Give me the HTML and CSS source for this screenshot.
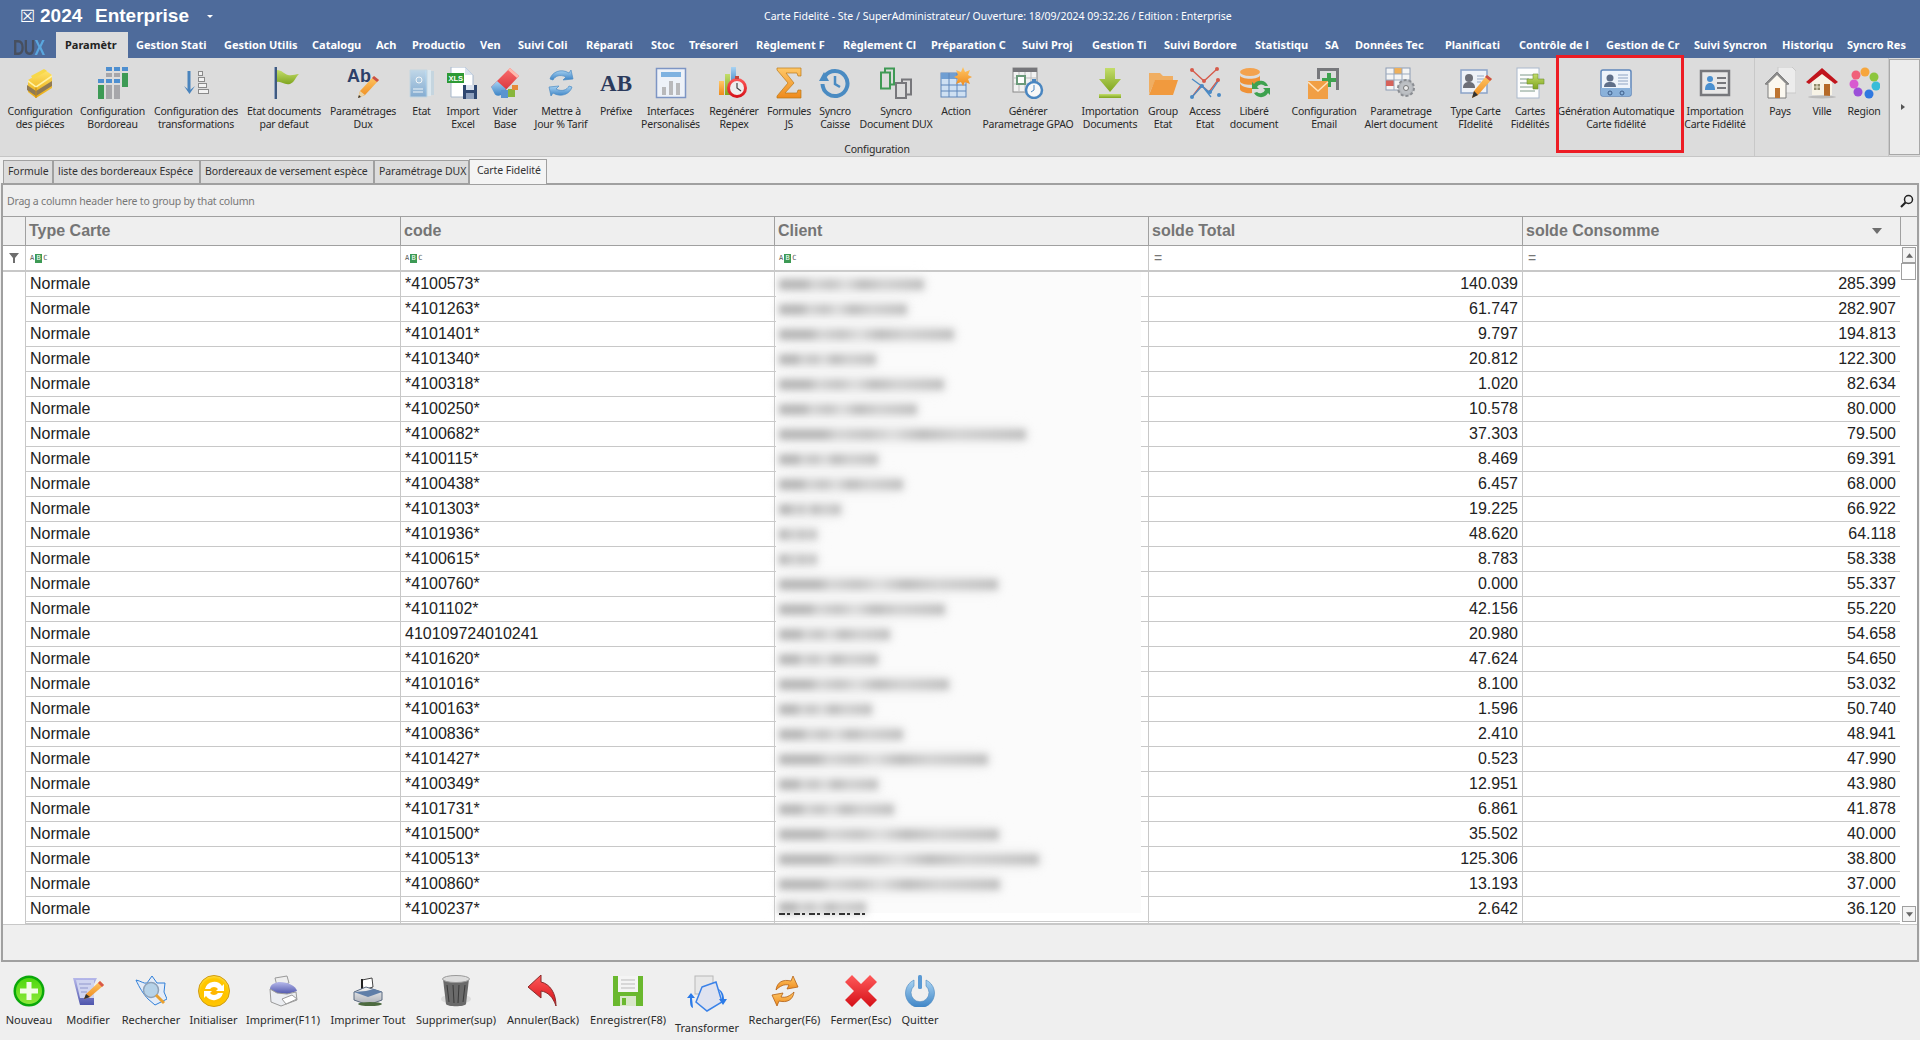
FILE: index.html
```html
<!DOCTYPE html>
<html lang="fr">
<head>
<meta charset="utf-8">
<title>Carte Fidelité</title>
<link rel="stylesheet" href="styles.css">
</head>
<body>
<svg class="defs" aria-hidden="true"><defs>
<linearGradient id="gY" x1="0" y1="0" x2="0" y2="1"><stop offset="0" stop-color="#ffe56a"/><stop offset="1" stop-color="#eaa80c"/></linearGradient>
<linearGradient id="gG" x1="0" y1="0" x2="0" y2="1"><stop offset="0" stop-color="#c3dd6a"/><stop offset="1" stop-color="#7fa51f"/></linearGradient>
<linearGradient id="gN" x1="0" y1="0" x2="0" y2="1"><stop offset="0" stop-color="#4dd80f"/><stop offset="1" stop-color="#8ee83a"/></linearGradient>
<linearGradient id="gB" x1="0" y1="0" x2="0" y2="1"><stop offset="0" stop-color="#a9d3f2"/><stop offset="1" stop-color="#3d84c6"/></linearGradient>
<linearGradient id="gR" x1="0" y1="0" x2="0" y2="1"><stop offset="0" stop-color="#ff5a5a"/><stop offset="1" stop-color="#d40f17"/></linearGradient>
<linearGradient id="gO" x1="0" y1="0" x2="0" y2="1"><stop offset="0" stop-color="#ffc766"/><stop offset="1" stop-color="#ee8a1c"/></linearGradient>
<linearGradient id="gS" x1="0" y1="0" x2="0" y2="1"><stop offset="0" stop-color="#f4f4f4"/><stop offset="1" stop-color="#a8acb4"/></linearGradient>
<linearGradient id="gV" x1="0" y1="0" x2="0" y2="1"><stop offset="0" stop-color="#b6b8ea"/><stop offset="1" stop-color="#4f56ad"/></linearGradient>
<radialGradient id="gC" cx=".5" cy=".55" r=".55"><stop offset="0" stop-color="#ffb400"/><stop offset=".8" stop-color="#ffc800"/><stop offset="1" stop-color="#ffe14a"/></radialGradient>
</defs></svg>

<header class="titlebar">
  <div class="brand"><span class="brand-box">☒</span><span class="brand-year">2024</span><span class="brand-name">Enterprise</span><span class="brand-caret"></span></div>
  <div class="doc-title">Carte Fidelité - Ste / SuperAdministrateur/ Ouverture: 18/09/2024 09:32:26 / Edition : Enterprise</div>
</header>

<nav class="nav">
  <div class="logo"><span class="logo-text">DU<span class="logo-x">X</span></span></div>
  <div class="nav-list">
    <span class="nav-item"><span class="nav-active">Paramètr</span></span>
    <span class="nav-item">Gestion Stati</span><span class="nav-item">Gestion Utilis</span><span class="nav-item">Catalogu</span><span class="nav-item">Ach</span><span class="nav-item">Productio</span><span class="nav-item">Ven</span><span class="nav-item">Suivi Coli</span><span class="nav-item">Réparati</span><span class="nav-item">Stoc</span><span class="nav-item">Trésoreri</span><span class="nav-item">Règlement F</span><span class="nav-item">Règlement Cl</span><span class="nav-item">Préparation C</span><span class="nav-item">Suivi Proj</span><span class="nav-item">Gestion Ti</span><span class="nav-item">Suivi Bordore</span><span class="nav-item">Statistiqu</span><span class="nav-item">SA</span><span class="nav-item">Données Tec</span><span class="nav-item">Planificati</span><span class="nav-item">Contrôle de l</span><span class="nav-item">Gestion de Cr</span><span class="nav-item">Suivi Syncron</span><span class="nav-item">Historiqu</span><span class="nav-item">Syncro Res</span>
  </div>
</nav>

<section class="ribbon">
  <div class="rb-group rb-main">
    <div class="rb-items rb-items-main">
      <div class="rb-item"><svg class="ico" viewBox="0 0 32 32"><path d="M4 13 21 3l7 5v13L12 31l-8-6z" fill="url(#gY)"/><path d="M4 13l8 6 16-11v2L12 21l-8-6z" fill="#fff3a8"/><path d="M7 9 20 2l3 2L9 12z" fill="#f7d84a"/><path d="M3 18l9 6 16-10v5L12 29l-9-6z" fill="#8f7a55"/><path d="M12 20v11" stroke="#c98a10" fill="none"/></svg><span class="rb-label">Configuration<br>des piéces</span></div>
      <div class="rb-item"><svg class="ico" viewBox="0 0 32 32"><g fill="#4e8fd0"><rect x="9" y="0" width="6" height="4"/><rect x="17" y="0" width="6" height="4"/><rect x="25" y="0" width="6" height="4"/><rect x="1" y="12" width="6" height="4"/><rect x="9" y="12" width="6" height="4"/><rect x="17" y="12" width="6" height="4"/></g><g fill="#a6a6aa"><rect x="9" y="6" width="6" height="4"/><rect x="17" y="6" width="6" height="4"/><rect x="9" y="18" width="6" height="14"/><rect x="17" y="18" width="6" height="14"/></g><g fill="#3d9a55"><rect x="25" y="6" width="6" height="14"/><rect x="1" y="18" width="6" height="14"/></g></svg><span class="rb-label">Configuration<br>Bordoreau</span></div>
      <div class="rb-item"><svg class="ico" viewBox="0 0 32 32"><path d="M9 4v20" stroke="#4a84bd" stroke-width="3" fill="none"/><path d="M4 19l5.500 8 5.500-8-5.500 4.500z" fill="#4a84bd"/><g fill="#f2f2f2" stroke="#8a8a8a"><rect x="18.500" y="4.500" width="4" height="4"/><rect x="18.500" y="10.500" width="6" height="4"/><rect x="18.500" y="16.500" width="8" height="4"/><rect x="18.500" y="22.500" width="10" height="4"/></g></svg><span class="rb-label">Configuration des<br>transformations</span></div>
      <div class="rb-item"><svg class="ico" viewBox="0 0 32 32"><path d="M9 3c5 0 7 4 11 5 4 .8 7-.5 11-1-3 2-4 8-9 10-6 1.500-8-3-13-2z" fill="url(#gG)"/><rect x="6" y="0" width="3" height="32" fill="#3f5a80"/><rect x="6" y="0" width="1" height="32" fill="#93a6c2"/></svg><span class="rb-label">Etat documents<br>par defaut</span></div>
      <div class="rb-item"><svg class="ico" viewBox="0 0 32 32"><text x="0" y="15" class="ico-sans" font-size="18" fill="#2c4069">Ab</text><path d="M11 31l2-7L27 9l5 4L18 28z" fill="url(#gO)"/><path d="M27 9l5 4-2 2-5-4z" fill="#c8504a"/><path d="M11 31l2-7 5 4z" fill="#e9d4a8"/><path d="M11 31l1-3 2 2z" fill="#333"/></svg><span class="rb-label">Paramétrages<br>Dux</span></div>
      <div class="rb-item"><svg class="ico" viewBox="0 0 32 32"><path d="M22 4h6v24h-6z" fill="#c5d5df"/><path d="M19 3h6v26h-6z" fill="#dce8ef"/><path d="M4 3h17v27H4z" fill="url(#gB)" opacity=".55"/><path d="M4 3h17v27H4z" fill="none" stroke="#c4d6e1"/><circle cx="13" cy="13" r="3" fill="none" stroke="#f2f6f8"/><path d="M7 22h10M7 25h10" stroke="#eef4f8" fill="none"/></svg><span class="rb-label">Etat</span></div>
      <div class="rb-item"><svg class="ico" viewBox="0 0 32 32"><path d="M4 0h14l8 8v22H4z" fill="#fff" stroke="#a8b8cc"/><path d="M18 0v8h8z" fill="#d8e2ee"/><rect x="0" y="6" width="17" height="10" fill="#2d9a35"/><text x="1.500" y="14" class="ico-sans" font-size="7.500" fill="#fff">XLS</text><rect x="16" y="18" width="14" height="14" fill="#2f4770"/><rect x="19" y="18" width="8" height="5" fill="#dce3ee"/><rect x="19" y="26" width="8" height="6" fill="#8ea0bd"/></svg><span class="rb-label">Import<br>Excel</span></div>
      <div class="rb-item"><svg class="ico" viewBox="0 0 32 32"><path d="M2 20 21 1l9 8L13 27z" fill="url(#gR)" opacity=".85"/><path d="M2 20l6-6 9 8-5 6c-2 1-4 1-6-.5z" fill="url(#gB)"/><path d="M21 1l9 8-2 2-9-8z" fill="#ffb9ae"/><rect x="12" y="23" width="7" height="8" fill="#5a94cf"/><rect x="19" y="22" width="7" height="8" fill="#88b63c"/><rect x="23" y="18" width="6" height="5" fill="#e58a3a"/></svg><span class="rb-label">Vider<br>Base</span></div>
      <div class="rb-item"><svg class="ico" viewBox="0 0 32 32"><path d="M5 12C7 5 16 1 24 6l2-3 2 9-10 1 3-3c-6-3-11-1-13 3z" fill="url(#gB)" stroke="#4a8bc4" stroke-width=".7"/><path d="M27 20c-2 7-11 11-19 6l-2 3-2-9 10-1-3 3c6 3 11 1 13-3z" fill="url(#gB)" stroke="#4a8bc4" stroke-width=".7"/></svg><span class="rb-label">Mettre à<br>Jour % Tarif</span></div>
      <div class="rb-item"><svg class="ico" viewBox="0 0 32 32"><text x="16" y="24" text-anchor="middle" class="ico-serif" font-size="23" fill="#2b3a5c">AB</text></svg><span class="rb-label">Préfixe</span></div>
      <div class="rb-item"><svg class="ico" viewBox="0 0 32 32"><rect x="1.500" y="1.500" width="29" height="29" fill="#eef2f8" stroke="#7d95c4" stroke-width="1.500"/><rect x="6" y="5" width="20" height="5" fill="#7fb2e0"/><rect x="7" y="20" width="4" height="8" fill="#b9b9bb"/><rect x="14" y="14" width="4" height="14" fill="#b9b9bb"/><rect x="21" y="16" width="4" height="12" fill="#b9b9bb"/></svg><span class="rb-label">Interfaces<br>Personalisés</span></div>
      <div class="rb-item"><svg class="ico" viewBox="0 0 32 32"><rect x="1" y="14" width="5" height="14" fill="url(#gO)"/><rect x="7" y="7" width="5" height="21" fill="url(#gG)"/><rect x="13" y="0" width="5" height="18" fill="url(#gB)"/><circle cx="19" cy="21" r="10" fill="url(#gR)"/><circle cx="19" cy="21" r="7" fill="#eee"/><path d="M19 16v5l4 3" stroke="#444" fill="none" stroke-width="1.200"/><rect x="17" y="9" width="4" height="3" fill="#c4463c"/></svg><span class="rb-label">Regénérer<br>Repex</span></div>
      <div class="rb-item"><svg class="ico" viewBox="0 0 32 32"><path d="M4 1h24v8h-3l-1-3H13l8 10-9 10h12l1-3h3v8H4v-2l11-13L4 3z" fill="url(#gO)" stroke="#b9791a" stroke-width=".7"/></svg><span class="rb-label">Formules<br>JS</span></div>
      <div class="rb-item"><svg class="ico" viewBox="0 0 32 32"><path d="M6 9a12.500 12.500 0 1 1-2.500 8" fill="none" stroke="#4a8bc2" stroke-width="4"/><path d="M0 14l5-9 5 9z" fill="#4a8bc2"/><path d="M16 9v8l5 3" fill="none" stroke="#4a8bc2" stroke-width="2.500"/></svg><span class="rb-label">Syncro<br>Caisse</span></div>
      <div class="rb-item"><svg class="ico" viewBox="0 0 32 32"><rect x="5" y="1.500" width="9" height="16" fill="none" stroke="#3f9a55" stroke-width="2"/><rect x="1" y="5.500" width="9" height="16" fill="#dcdcdc" stroke="#3f9a55" stroke-width="2"/><rect x="22" y="12.500" width="9" height="15" fill="none" stroke="#77777b" stroke-width="2"/><rect x="16" y="16" width="10" height="15" fill="#dcdcdc" stroke="#77777b" stroke-width="2"/></svg><span class="rb-label">Syncro<br>Document DUX</span></div>
      <div class="rb-item"><svg class="ico" viewBox="0 0 32 32"><rect x="1" y="6" width="25" height="24" fill="#cfe0f2" stroke="#5f86ba"/><rect x="1" y="6" width="25" height="6" fill="#6f9ed2"/><path d="M1 18h25M1 24h25M9 6v24M17 6v24" stroke="#5f86ba" fill="none"/><path d="M23 0l2 5 5-2-2 5 4 2-4 2 2 5-5-2-2 4-2-4-5 2 2-5-4-2 4-2-2-5 5 2z" fill="url(#gO)"/></svg><span class="rb-label">Action</span></div>
      <div class="rb-item"><svg class="ico" viewBox="0 0 32 32"><rect x="1" y="1" width="24" height="24" fill="#f2f2f2" stroke="#888"/><rect x="1" y="1" width="24" height="4" fill="#76767a"/><path d="M1 11h24M1 17h24M7 5v20M13 5v20M19 5v20" stroke="#bbb" fill="none"/><rect x="5" y="9" width="8" height="8" fill="#fff" stroke="#6b9a7a" stroke-width="2"/><circle cx="22" cy="23" r="8" fill="#f8f8f8" stroke="#4a86c0" stroke-width="2.500"/><rect x="20" y="12" width="4" height="3" fill="#4a86c0"/><path d="M22 18v5l-3 2" stroke="#4a86c0" fill="none"/></svg><span class="rb-label">Générer<br>Parametrage GPAO</span></div>
      <div class="rb-item"><svg class="ico" viewBox="0 0 32 32"><path d="M11 1h10v11h6L16 25 5 12h6z" fill="url(#gG)"/><rect x="5" y="27" width="22" height="4" fill="url(#gG)"/></svg><span class="rb-label">Importation<br>Documents</span></div>
      <div class="rb-item"><svg class="ico" viewBox="0 0 32 32"><path d="M2 27V6h11l3 3h10v5H8z" fill="#f0ae62"/><path d="M2 28 8 13h23l-5 15z" fill="#f19a3e"/></svg><span class="rb-label">Group<br>Etat</span></div>
      <div class="rb-item"><svg class="ico" viewBox="0 0 32 32"><path d="M3 3l12 11 13-12M3 30l9-12 8 7 9-12" fill="none" stroke="#d65a4a" stroke-width="1.300"/><path d="M3 30 13 19l8 7 9-13M3 12l11 8 8 10" fill="none" stroke="#4a8ac4" stroke-width="1.300"/><g fill="#d65a4a"><circle cx="3" cy="3" r="2"/><circle cx="15" cy="14" r="2"/><circle cx="28" cy="2" r="2"/><circle cx="29" cy="13" r="2"/></g><g fill="#4a8ac4"><circle cx="3" cy="30" r="2"/><circle cx="13" cy="19" r="2"/><circle cx="21" cy="25" r="2"/><circle cx="30" cy="28" r="2"/></g></svg><span class="rb-label">Access<br>Etat</span></div>
      <div class="rb-item"><svg class="ico" viewBox="0 0 32 32"><ellipse cx="12" cy="5" rx="10" ry="4" fill="#f3a24e"/><path d="M2 8v6c0 5 20 5 20 0V8c0 5-20 5-20 0zM2 16v6c0 3 8 5 12 4v-5c-5 0-12-2-12-5z" fill="#ef9136"/><path d="M30 19a8 8 0 0 0-14-2l-2-2v7h7l-2-2a5 5 0 0 1 8-1zM16 26a8 8 0 0 0 14 0l2 2v-7h-7l2 2a5 5 0 0 1-8 2z" fill="#3ea24f"/></svg><span class="rb-label">Libéré<br>document</span></div>
      <div class="rb-item"><svg class="ico" viewBox="0 0 32 32"><path d="M9 1h22v22h-3V4H9z" fill="#77787c"/><path d="M9 1h3v11H9z" fill="#77787c"/><path d="M19 6h4v5h5v4h-5v5h-4v-5h-5v-4h5z" fill="#3ea24f"/><rect x="0" y="14" width="20" height="18" fill="#f19f45"/><path d="M0 15l10 9 10-9" fill="none" stroke="#ffe3bd" stroke-width="1.500"/></svg><span class="rb-label">Configuration<br>Email</span></div>
      <div class="rb-item"><svg class="ico" viewBox="0 0 32 32"><rect x="1" y="1" width="24" height="22" fill="#f4f4f4" stroke="#8c9bb3"/><rect x="9" y="1" width="8" height="6" fill="#efb05a"/><rect x="1" y="13" width="8" height="6" fill="#d6625a"/><path d="M1 7h24M1 13h24M9 1v22M17 1v22" stroke="#9ba9bd" fill="none"/><circle cx="21" cy="21" r="8" fill="#b4b7bb" stroke="#8a8d92" stroke-width="2" stroke-dasharray="3 2"/><circle cx="21" cy="21" r="6" fill="#bdc0c4"/><circle cx="21" cy="21" r="2.500" fill="#eee" stroke="#777"/></svg><span class="rb-label">Parametrage<br>Alert document</span></div>
      <div class="rb-item"><svg class="ico" viewBox="0 0 32 32"><rect x="1" y="3" width="26" height="23" fill="#eef2f8" stroke="#8ba3c8" stroke-width="1.500"/><circle cx="9" cy="11" r="4" fill="#6d6f78"/><path d="M3 21c0-5 3-6 6-6s6 1 6 6z" fill="#6d6f78"/><path d="M17 9h7M17 12h7M17 15h4" stroke="#97a9c4" fill="none"/><path d="M12 31l2-7L27 8l5 4-14 16z" fill="url(#gO)"/><path d="M27 8l5 4-2 2-5-4z" fill="#c8504a"/><path d="M12 31l2-7 4 4z" fill="#333"/></svg><span class="rb-label">Type Carte<br>FIdelité</span></div>
      <div class="rb-item"><svg class="ico" viewBox="0 0 32 32"><rect x="3" y="1" width="22" height="30" fill="#fdfdfd" stroke="#a9b8cc"/><path d="M6 8h13M6 12h9M6 16h15M6 20h15M6 24h15" stroke="#7f9a8a" fill="none"/><path d="M19 7h5v5h6v5h-6v5h-5v-5h-6v-5h6z" fill="url(#gG)" stroke="#6f9132" stroke-width=".6"/></svg><span class="rb-label">Cartes<br>Fidélités</span></div>
      <div class="rb-item rb-item-marked"><svg class="ico" viewBox="0 0 32 32"><rect x="1" y="3" width="30" height="26" rx="2" fill="#eef3fa" stroke="#5f86ba" stroke-width="1.500"/><path d="M1 21h30v6a2 2 0 0 1-2 2H3a2 2 0 0 1-2-2z" fill="#8ab1da"/><circle cx="10" cy="11" r="3.500" fill="#5f6e88"/><path d="M4 20c0-4 3-5 6-5s6 1 6 5z" fill="#5f6e88"/><path d="M18 8h10M18 11h10M18 14h10M18 17h10" stroke="#8ea3c2" fill="none"/><circle cx="10" cy="26" r="2" fill="none" stroke="#3d5d89"/><circle cx="22" cy="26" r="2" fill="none" stroke="#3d5d89"/></svg><span class="rb-label">Génération Automatique<br>Carte fidélité</span><span class="rb-mark"></span></div>
      <div class="rb-item"><svg class="ico" viewBox="0 0 32 32"><rect x="2" y="4" width="28" height="24" fill="#e8e8e8" stroke="#77787c" stroke-width="2.500"/><circle cx="11" cy="12" r="3" fill="#4a90d0"/><path d="M6 23c0-5 2-7 5-7s5 2 5 7z" fill="#4a90d0"/><path d="M18 11h9M18 16h9M18 21h9" stroke="#77787c" stroke-width="2" fill="none"/></svg><span class="rb-label">Importation<br>Carte Fidélité</span></div>
    </div>
    <div class="rb-title">Configuration</div>
  </div>
  <div class="rb-group rb-side">
    <div class="rb-items rb-items-side">
      <div class="rb-item"><svg class="ico" viewBox="0 0 32 32"><path d="M14 0h14l4 4v22H14z" fill="#ececec" stroke="#c9c9c9"/><path d="M1 17 13 5l12 12h-3v14H4V17z" fill="#fbf8f0" stroke="#7d7d7d"/><rect x="11" y="21" width="5" height="10" fill="#bd7430"/><path d="M1 17 13 5l12 12-2 1L13 8 3 18z" fill="#8b8b8b"/></svg><span class="rb-label">Pays</span></div>
      <div class="rb-item"><svg class="ico" viewBox="0 0 32 32"><path d="M6 14 16 5l10 9v14H6z" fill="#f7f3e6"/><path d="M0 15 16 1l16 14-3 2L16 7 3 17z" fill="#c1151c"/><rect x="18" y="17" width="6" height="12" fill="#b56a28"/><rect x="8" y="17" width="6" height="6" fill="#8f8a6a"/><path d="M11 17v6M8 20h6" stroke="#eee8d0" fill="none"/><ellipse cx="16" cy="30" rx="14" ry="1.500" fill="#bbb"/></svg><span class="rb-label">Ville</span></div>
      <div class="rb-item"><svg class="ico" viewBox="0 0 32 32"><circle cx="17" cy="5" r="4.500" fill="#f6a63c"/><circle cx="26" cy="10" r="4.500" fill="#8cc63e"/><circle cx="28" cy="19" r="4.500" fill="#38bcd8"/><circle cx="21" cy="27" r="4.500" fill="#2f78e0"/><circle cx="10" cy="25" r="4.500" fill="#9b4fd8"/><circle cx="6" cy="17" r="4.500" fill="#d85ad0"/><circle cx="8" cy="8" r="4.500" fill="#f0607a"/><circle cx="17" cy="16" r="5" fill="#dcdcdc"/></svg><span class="rb-label">Region</span></div>
    </div>
  </div>
  <button class="rb-scroll" type="button"><span class="rb-scroll-arrow"></span></button>
</section>

<div class="tabs">
  <span class="tab">Formule</span><span class="tab">liste des bordereaux Espéce</span><span class="tab">Bordereaux de versement espèce</span><span class="tab">Paramétrage DUX</span><span class="tab tab-active">Carte Fidelité</span>
</div>

<main class="panel">
  <div class="groupbar"><span>Drag a column header here to group by that column</span>
    <svg class="search" viewBox="0 0 14 14"><circle cx="8.500" cy="5.500" r="4" fill="none" stroke="#222" stroke-width="1.500"/><path d="M5.500 8.500 1 13" stroke="#222" stroke-width="2.200" fill="none"/></svg>
  </div>
  <div class="gridwrap">
    <table class="grid">
      <colgroup><col class="c-rh"><col class="c-a"><col class="c-b"><col class="c-b"><col class="c-b"><col class="c-e"></colgroup>
      <thead>
        <tr class="head"><th></th><th>Type Carte</th><th>code</th><th>Client</th><th>solde Total</th><th><span class="th-flex">solde Consomme<svg class="caret" viewBox="0 0 10 6"><path d="M0 0h10L5 6z" fill="#6e6e6e"/></svg></span></th></tr>
        <tr class="filter"><td><svg class="funnel" viewBox="0 0 10 10"><path d="M0 0h10L6 5v5H4V5z" fill="#6e6e6e"/></svg></td><td><span class="abc">A<b>B</b>C</span></td><td><span class="abc">A<b>B</b>C</span></td><td><span class="abc">A<b>B</b>C</span></td><td><span class="eq">=</span></td><td><span class="eq">=</span></td></tr>
      </thead>
      <tbody>
        <tr><td></td><td>Normale</td><td>*4100573*</td><td></td><td class="n">140.039</td><td class="n">285.399</td></tr>
        <tr><td></td><td>Normale</td><td>*4101263*</td><td></td><td class="n">61.747</td><td class="n">282.907</td></tr>
        <tr><td></td><td>Normale</td><td>*4101401*</td><td></td><td class="n">9.797</td><td class="n">194.813</td></tr>
        <tr><td></td><td>Normale</td><td>*4101340*</td><td></td><td class="n">20.812</td><td class="n">122.300</td></tr>
        <tr><td></td><td>Normale</td><td>*4100318*</td><td></td><td class="n">1.020</td><td class="n">82.634</td></tr>
        <tr><td></td><td>Normale</td><td>*4100250*</td><td></td><td class="n">10.578</td><td class="n">80.000</td></tr>
        <tr><td></td><td>Normale</td><td>*4100682*</td><td></td><td class="n">37.303</td><td class="n">79.500</td></tr>
        <tr><td></td><td>Normale</td><td>*4100115*</td><td></td><td class="n">8.469</td><td class="n">69.391</td></tr>
        <tr><td></td><td>Normale</td><td>*4100438*</td><td></td><td class="n">6.457</td><td class="n">68.000</td></tr>
        <tr><td></td><td>Normale</td><td>*4101303*</td><td></td><td class="n">19.225</td><td class="n">66.922</td></tr>
        <tr><td></td><td>Normale</td><td>*4101936*</td><td></td><td class="n">48.620</td><td class="n">64.118</td></tr>
        <tr><td></td><td>Normale</td><td>*4100615*</td><td></td><td class="n">8.783</td><td class="n">58.338</td></tr>
        <tr><td></td><td>Normale</td><td>*4100760*</td><td></td><td class="n">0.000</td><td class="n">55.337</td></tr>
        <tr><td></td><td>Normale</td><td>*4101102*</td><td></td><td class="n">42.156</td><td class="n">55.220</td></tr>
        <tr><td></td><td>Normale</td><td>410109724010241</td><td></td><td class="n">20.980</td><td class="n">54.658</td></tr>
        <tr><td></td><td>Normale</td><td>*4101620*</td><td></td><td class="n">47.624</td><td class="n">54.650</td></tr>
        <tr><td></td><td>Normale</td><td>*4101016*</td><td></td><td class="n">8.100</td><td class="n">53.032</td></tr>
        <tr><td></td><td>Normale</td><td>*4100163*</td><td></td><td class="n">1.596</td><td class="n">50.740</td></tr>
        <tr><td></td><td>Normale</td><td>*4100836*</td><td></td><td class="n">2.410</td><td class="n">48.941</td></tr>
        <tr><td></td><td>Normale</td><td>*4101427*</td><td></td><td class="n">0.523</td><td class="n">47.990</td></tr>
        <tr><td></td><td>Normale</td><td>*4100349*</td><td></td><td class="n">12.951</td><td class="n">43.980</td></tr>
        <tr><td></td><td>Normale</td><td>*4101731*</td><td></td><td class="n">6.861</td><td class="n">41.878</td></tr>
        <tr><td></td><td>Normale</td><td>*4101500*</td><td></td><td class="n">35.502</td><td class="n">40.000</td></tr>
        <tr><td></td><td>Normale</td><td>*4100513*</td><td></td><td class="n">125.306</td><td class="n">38.800</td></tr>
        <tr><td></td><td>Normale</td><td>*4100860*</td><td></td><td class="n">13.193</td><td class="n">37.000</td></tr>
        <tr><td></td><td>Normale</td><td>*4100237*</td><td></td><td class="n">2.642</td><td class="n">36.120</td></tr>
        <tr class="stub"><td></td><td></td><td></td><td></td><td></td><td></td></tr>
      </tbody>
    </table>
    <div class="redact">
      <div class="r-row"><i style="width:145px"></i></div><div class="r-row"><i style="width:128px"></i></div><div class="r-row"><i style="width:175px"></i></div><div class="r-row"><i style="width:97px"></i></div><div class="r-row"><i style="width:165px"></i></div><div class="r-row"><i style="width:138px"></i></div><div class="r-row"><i style="width:247px"></i></div><div class="r-row"><i style="width:99px"></i></div><div class="r-row"><i style="width:124px"></i></div><div class="r-row"><i style="width:62px"></i></div><div class="r-row"><i style="width:38px"></i></div><div class="r-row"><i style="width:38px"></i></div><div class="r-row"><i style="width:219px"></i></div><div class="r-row"><i style="width:166px"></i></div><div class="r-row"><i style="width:111px"></i></div><div class="r-row"><i style="width:99px"></i></div><div class="r-row"><i style="width:170px"></i></div><div class="r-row"><i style="width:93px"></i></div><div class="r-row"><i style="width:124px"></i></div><div class="r-row"><i style="width:209px"></i></div><div class="r-row"><i style="width:99px"></i></div><div class="r-row"><i style="width:115px"></i></div><div class="r-row"><i style="width:220px"></i></div><div class="r-row"><i style="width:260px"></i></div><div class="r-row"><i style="width:221px"></i></div><div class="r-row r-last"><i style="width:87px"></i></div>
      <span class="sliver"></span>
    </div>
    <aside class="vscroll">
      <div class="vs-head"></div>
      <div class="vs-track">
        <span class="vs-btn"><svg viewBox="0 0 8 5"><path d="M0 5h8L4 0z" fill="#666"/></svg></span>
        <span class="vs-thumb"></span>
        <span class="vs-btn vs-down"><svg viewBox="0 0 8 5"><path d="M0 0h8L4 5z" fill="#666"/></svg></span>
      </div>
    </aside>
  </div>
  <div class="panel-foot"></div>
</main>

<footer class="toolbar">
  <div class="tb-item"><svg class="tb-ico" viewBox="0 0 32 32"><circle cx="16" cy="16" r="15.500" fill="#0aa80a"/><circle cx="16" cy="16" r="13" fill="url(#gN)"/><path d="M13.500 7h5v6.500H25v5h-6.500V25h-5v-6.500H7v-5h6.500z" fill="#f2fbe8"/></svg><span class="tb-label">Nouveau</span></div>
  <div class="tb-item"><svg class="tb-ico" viewBox="0 0 32 32"><path d="M1 3h24l-3 6 0 21H8z" fill="url(#gV)"/><path d="M4 5h18v18H8z" fill="#cfd4f0"/><path d="M7 9h12M8 13h8M9 17h6" stroke="#8f96cc" fill="none"/><path d="M12 24l2-5L28 6l4 4-14 12z" fill="url(#gO)"/><path d="M28 6l4 4-2 2-4-4z" fill="#d8574b"/><path d="M12 24l2-5 4 3z" fill="#333"/></svg><span class="tb-label">Modifier</span></div>
  <div class="tb-item"><svg class="tb-ico" viewBox="0 0 32 32"><path d="M1 5c5 1 8 4 11 3l5-7 5 7 8 0-1 9 3 7-12 6-7-6c-4-4-9-12-12-19z" fill="#e4ecf8" stroke="#2f7fd8"/><circle cx="16" cy="15" r="7.500" fill="#b6d2e8" stroke="#8fa2b8" stroke-width="1.500"/><path d="M21 20l8 8" stroke="#e8a030" stroke-width="3" fill="none"/></svg><span class="tb-label">Rechercher</span></div>
  <div class="tb-item"><svg class="tb-ico" viewBox="0 0 32 32"><circle cx="16" cy="16" r="15.500" fill="url(#gC)" stroke="#d09a10"/><path d="M7 14a9.500 9.500 0 0 1 17-3l2-2v7h-8l2-2a5 5 0 0 0-8 0zM25 18a9.500 9.500 0 0 1-17 3l-2 2v-7h8l-2 2a5 5 0 0 0 8 0z" fill="#fff"/></svg><span class="tb-label">Initialiser</span></div>
  <div class="tb-item"><svg class="tb-ico" viewBox="0 0 32 32"><path d="M8 3l12-2 2 7-12 3z" fill="#eee" stroke="#999"/><path d="M3 14c0-5 6-7 10-7 8 0 16 4 17 9l-9 3L8 18z" fill="url(#gV)"/><path d="M3 14l1 13 10 4 16-6-1-8-9 2-10-1z" fill="#eceef2" stroke="#9a9a9a"/><path d="M15 24l10-4 5 4-11 5z" fill="#fff" stroke="#999"/></svg><span class="tb-label">Imprimer(F11)</span></div>
  <div class="tb-item"><svg class="tb-ico" viewBox="0 0 32 32"><path d="M10 5l10-2 1 9-10 3z" fill="#fff" stroke="#444"/><rect x="9" y="4" width="2" height="11" fill="#222"/><path d="M2 17l12-5 16 5v8l-14 5-14-5z" fill="url(#gS)" stroke="#5b6a80"/><path d="M2 17l14 5 14-5-8-3-8 2z" fill="#5f7ea8"/><ellipse cx="18" cy="29" rx="12" ry="2" fill="#4d6a3f"/></svg><span class="tb-label">Imprimer Tout</span></div>
  <div class="tb-item"><svg class="tb-ico" viewBox="0 0 32 32"><ellipse cx="16" cy="24" rx="15" ry="5" fill="#ddd"/><path d="M3 4l3 25c1 3 19 3 20 0l3-25z" fill="#6a6a6a"/><ellipse cx="16" cy="4" rx="13.500" ry="3.500" fill="#dcdcdc" stroke="#999"/><path d="M7 10l2 17M13 10l1 18M19 10l-1 18M25 10l-2 17" stroke="#3a3a3a" fill="none"/></svg><span class="tb-label">Supprimer(sup)</span></div>
  <div class="tb-item"><svg class="tb-ico" viewBox="0 0 32 32"><path d="M1 12 14 0v7c9 2 15 11 15 24-3-9-8-14-15-15v7z" fill="url(#gR)" stroke="#8a2a2a"/></svg><span class="tb-label">Annuler(Back)</span></div>
  <div class="tb-item"><svg class="tb-ico" viewBox="0 0 32 32"><path d="M1 1h30v30H1z" fill="#6ab82e"/><rect x="6" y="1" width="20" height="16" fill="#f4f4f4"/><path d="M9 5h14M9 9h14M9 13h14" stroke="#bbb" fill="none"/><rect x="8" y="21" width="16" height="10" fill="#d8e6c8"/><rect x="10" y="23" width="4" height="7" fill="#6ab82e"/></svg><span class="tb-label">Enregistrer(F8)</span></div>
  <div class="tb-item tb-item-low"><svg class="tb-ico-lg" viewBox="0 0 40 40"><rect x="8" y="1" width="18" height="18" fill="#e8e8e8" stroke="#b8b8b8"/><path d="M15 12 29 7l6 20-15 9-11-9z" fill="#dfe3f0" stroke="#3a82e8" stroke-width="1.500"/><path d="M0 23l4-5 4 5H5l1 10c-3-1-3-5-3-10zM40 24l-4 6-4-6h3c0-4-1-7-4-10 4 1 6 6 6 10z" fill="#2c7be8"/></svg><span class="tb-label">Transformer</span></div>
  <div class="tb-item"><svg class="tb-ico" viewBox="0 0 32 32"><path d="M7 15C8 7 14 4 22 6l2-5 5 11-11 2 2-4C15 9 11 11 7 15z" fill="url(#gO)" stroke="#b35f14" stroke-width=".8"/><path d="M25 17c-1 8-7 11-15 9l-2 5L3 20l11-2-2 4c5 1 9-1 13-5z" fill="url(#gO)" stroke="#b35f14" stroke-width=".8"/></svg><span class="tb-label">Recharger(F6)</span></div>
  <div class="tb-item"><svg class="tb-ico" viewBox="0 0 32 32"><path d="M7 0l9 9 9-9 7 7-9 9 9 9-7 7-9-9-9 9-7-7 9-9-9-9z" fill="url(#gR)"/></svg><span class="tb-label">Fermer(Esc)</span></div>
  <div class="tb-item"><svg class="tb-ico" viewBox="0 0 32 32"><path d="M10 5a14.500 14.500 0 1 0 12 0v6a9 9 0 1 1-12 0z" fill="url(#gB)" stroke="#4a86be" stroke-width=".6"/><rect x="14" y="0" width="4" height="14" rx="1.500" fill="#5b9ad4"/></svg><span class="tb-label">Quitter</span></div>
</footer>
</body>
</html>
```

FILE: styles.css
```css
* { box-sizing: border-box; }
html { height: 1040px; overflow: hidden; }
html, body { margin: 0; padding: 0; }
body {
  width: 1920px; height: 1040px; overflow: hidden;
  display: flex; flex-direction: column;
  background: #efefef; color: #2a2a2a;
  font-family: "Noto Sans", "Liberation Sans", sans-serif; font-size: 11px;
}
.defs { position: absolute; width: 0; height: 0; }
.ico-serif { font-family: "Liberation Serif", serif; font-weight: 700; }
.ico-sans { font-family: "Liberation Sans", sans-serif; font-weight: 700; }

.titlebar { height: 32px; flex: none; background: #4e6b9b; color: #fff; display: flex; align-items: center; padding-left: 20px; }
.brand { width: 744px; display: flex; align-items: center; font-family: "Liberation Sans", sans-serif; font-weight: 700; font-size: 19px; }
.brand-box { width: 20px; font-family: "DejaVu Sans", sans-serif; font-weight: 400; font-size: 17px; }
.brand-year { width: 55px; }
.brand-name { width: 112px; }
.brand-caret { width: 0; height: 0; border: 3px solid transparent; border-top: 3px solid #fff; margin-top: 3px; }
.doc-title { font-size: 10.500px; white-space: nowrap; }

.nav { height: 26px; flex: none; background: #4e6b9b; display: flex; }
.logo { width: 56px; padding: 6px 0 0 13px; line-height: 20px; }
.logo-text { display: block; width: 48px; font: 700 22px/20px "Liberation Sans", sans-serif; color: #474f5e; letter-spacing: -1px; transform: scaleX(.72); transform-origin: left center; white-space: nowrap; }
.logo-x { color: #5aa7de; }
.nav-list {
  flex: 1; display: grid; font-weight: 700; color: #fff; font-size: 11px; line-height: 26px; white-space: nowrap;
  grid-template-columns: 80px 88px 88px 64px 36px 68px 38px 68px 65px 38px 67px 87px 88px 91px 70px 72px 91px 70px 30px 90px 74px 87px 88px 88px 65px 1fr;
}
.nav-active { display: block; width: 72px; padding-left: 9px; background: #dcdcdc; color: #222; }

.ribbon { height: 99px; flex: none; display: flex; background: #dcdcdc; border-bottom: 1px solid #c6c6c6; }
.rb-group { display: flex; flex-direction: column; border-right: 1px solid #c8c8c8; }
.rb-main { width: 1755px; }
.rb-side { width: 134px; }
.rb-items { height: 84px; display: grid; }
.rb-items-main { grid-template-columns: 80px 65px 102px 74px 84px 33px 50px 34px 78px 32px 77px 50px 60px 32px 90px 30px 114px 50px 56px 28px 70px 70px 84px 65px 44px 128px 70px; }
.rb-items-side { grid-template-columns: 50px 34px 50px; }
.rb-item { position: relative; display: flex; flex-direction: column; align-items: center; padding-top: 9px; min-width: 0; }
.ico { width: 32px; height: 32px; flex: none; margin-bottom: 6px; }
.rb-label { display: block; text-align: center; white-space: nowrap; line-height: 13px; font-size: 10.500px; letter-spacing: -.25px; color: #2a2a2a; }
.rb-title { text-align: center; font-size: 10.500px; letter-spacing: -.2px; line-height: 14px; }
.rb-mark { position: absolute; left: 4px; top: -3px; width: 128px; height: 98px; border: 3px solid #ed1c24; }
.rb-scroll { flex: 1; margin: 1px 0 1px 0; padding: 0; background: #ececec; border: 1px solid #a8a8a8; display: flex; justify-content: center; padding-top: 44px; }
.rb-scroll-arrow { width: 0; height: 0; border: 3px solid transparent; border-left: 4px solid #555; }

.tabs { height: 26px; flex: none; display: flex; align-items: flex-end; padding-left: 3px; background: #f0f0f0; }
.tab { height: 23px; line-height: 20px; padding: 0 2px 0 4px; background: #dcdcdc; border: 1px solid #a0a0a0; border-bottom: 0; font-size: 10.500px; letter-spacing: -.08px; white-space: nowrap; color: #333; }
.tab:nth-child(1) { width: 50px; }
.tab:nth-child(2) { width: 147px; }
.tab:nth-child(3) { width: 174px; }
.tab:nth-child(4) { width: 95px; }
.tab-active { width: 78px; height: 25px; padding-left: 7px; background: #f4f4f4; color: #333; position: relative; margin-bottom: -1px; z-index: 1; }

.panel { flex: none; height: 779px; margin: 0 1px; border: 2px solid #a0a0a0; background: #efefef; display: flex; flex-direction: column; }
.groupbar { height: 32px; flex: none; border-bottom: 1px solid #a0a0a0; display: flex; align-items: center; justify-content: space-between; padding: 0 4px; font-size: 10.500px; letter-spacing: -.2px; color: #777; }
.search { width: 14px; height: 14px; margin-right: -1px; }

.gridwrap { position: relative; display: flex; flex: none; }
.grid { width: 1897px; flex: none; border-collapse: separate; border-spacing: 0; table-layout: fixed; background: #fff; font-family: "Liberation Sans", sans-serif; font-size: 16px; color: #222; }
.c-rh { width: 22px; } .c-a { width: 375px; } .c-b { width: 374px; } .c-e { width: 378px; }
.grid th, .grid td { padding: 0 4px; white-space: nowrap; border-left: 1px solid #c8c8c8; }
.grid tbody td { height: 25px; border-bottom: 1px solid #c8c8c8; }
.grid tr > :first-child { border-left: 0; padding: 0; }
.grid tbody td:first-child { border-bottom: 0; }
.grid th { height: 29px; background: #efefef; border-left-color: #a0a0a0; border-bottom: 1px solid #a0a0a0; text-align: left; font-size: 16px; font-weight: 700; color: #757575; padding-left: 3px; }
.th-flex { display: flex; justify-content: space-between; align-items: center; padding-right: 14px; }
.caret { width: 10px; height: 6px; }
.filter td { height: 26px; border-bottom: 2px solid #c8c8c8; }
.funnel { display: block; width: 10px; height: 10px; margin: 0 0 0 6px; }
.abc { display: inline-flex; align-items: center; font: 7px/9px "DejaVu Sans Mono", monospace; color: #555; vertical-align: middle; }
.abc b { display: block; width: 7px; background: #3d9a55; color: #fff; font-weight: 400; text-align: center; margin: 0 1px; }
.eq { display: block; font-size: 14px; line-height: 14px; color: #777; padding-left: 1px; }
.n { text-align: right; }
.grid .stub td { height: 2px; padding: 0; font-size: 0; line-height: 0; }

.redact { position: absolute; left: 773px; top: 55px; width: 365px; height: 641px; background: #fbfbfb; }
.r-row { height: 25px; padding-left: 3px; display: flex; align-items: center; }
.r-last { height: 16px; align-items: flex-end; }
.r-row i {
  display: block; height: 11px; filter: blur(3.500px);
  background:
    linear-gradient(90deg, #b8b8b8 0 18%, #d6d6d6 24%, #c4c4c4 36%, #dedede 46%, #bcbcbc 58%, #d2d2d2 72%, #c0c0c0 100%);
  box-shadow: 0 0 12px #e6e6e6;
}
.sliver { position: absolute; top: 100%; left: 3px; width: 87px; height: 2px; background: repeating-linear-gradient(90deg, #333 0 6px, transparent 6px 8px, #333 8px 11px, transparent 11px 15px); }

.vscroll { flex: 1; display: flex; flex-direction: column; background: #fff; }
.vs-head { height: 29px; flex: none; background: #efefef; border-left: 1px solid #a0a0a0; border-bottom: 1px solid #a0a0a0; }
.vs-track { flex: 1; display: flex; flex-direction: column; padding: 1px 1px 2px 2px; }
.vs-btn { width: 14px; height: 16px; flex: none; display: flex; align-items: center; justify-content: center; background: #f4f4f4; border: 1px solid #a0a0a0; }
.vs-btn svg { width: 7px; height: 5px; }
.vs-thumb { width: 15px; height: 17px; flex: none; background: #fff; border: 1px solid #a0a0a0; margin-left: -1px; }
.vs-down { margin-top: auto; }
.panel-foot { flex: 1; background: #efefef; border-top: 1px solid #c8c8c8; }

.toolbar {
  flex: 1; display: grid; padding-top: 13px;
  grid-template-columns: 58px 60px 66px 59px 80px 90px 86px 88px 82px 76px 79px 74px 44px;
  justify-content: start;
}
.tb-item { display: flex; flex-direction: column; align-items: center; }
.tb-item-low { margin-top: 0; }
.tb-ico { width: 32px; height: 32px; flex: none; margin-bottom: 6px; }
.tb-ico-lg { width: 40px; height: 40px; flex: none; margin-bottom: 6px; }
.tb-label { display: block; white-space: nowrap; font-size: 11px; line-height: 14px; color: #2a2a2a; }
```
